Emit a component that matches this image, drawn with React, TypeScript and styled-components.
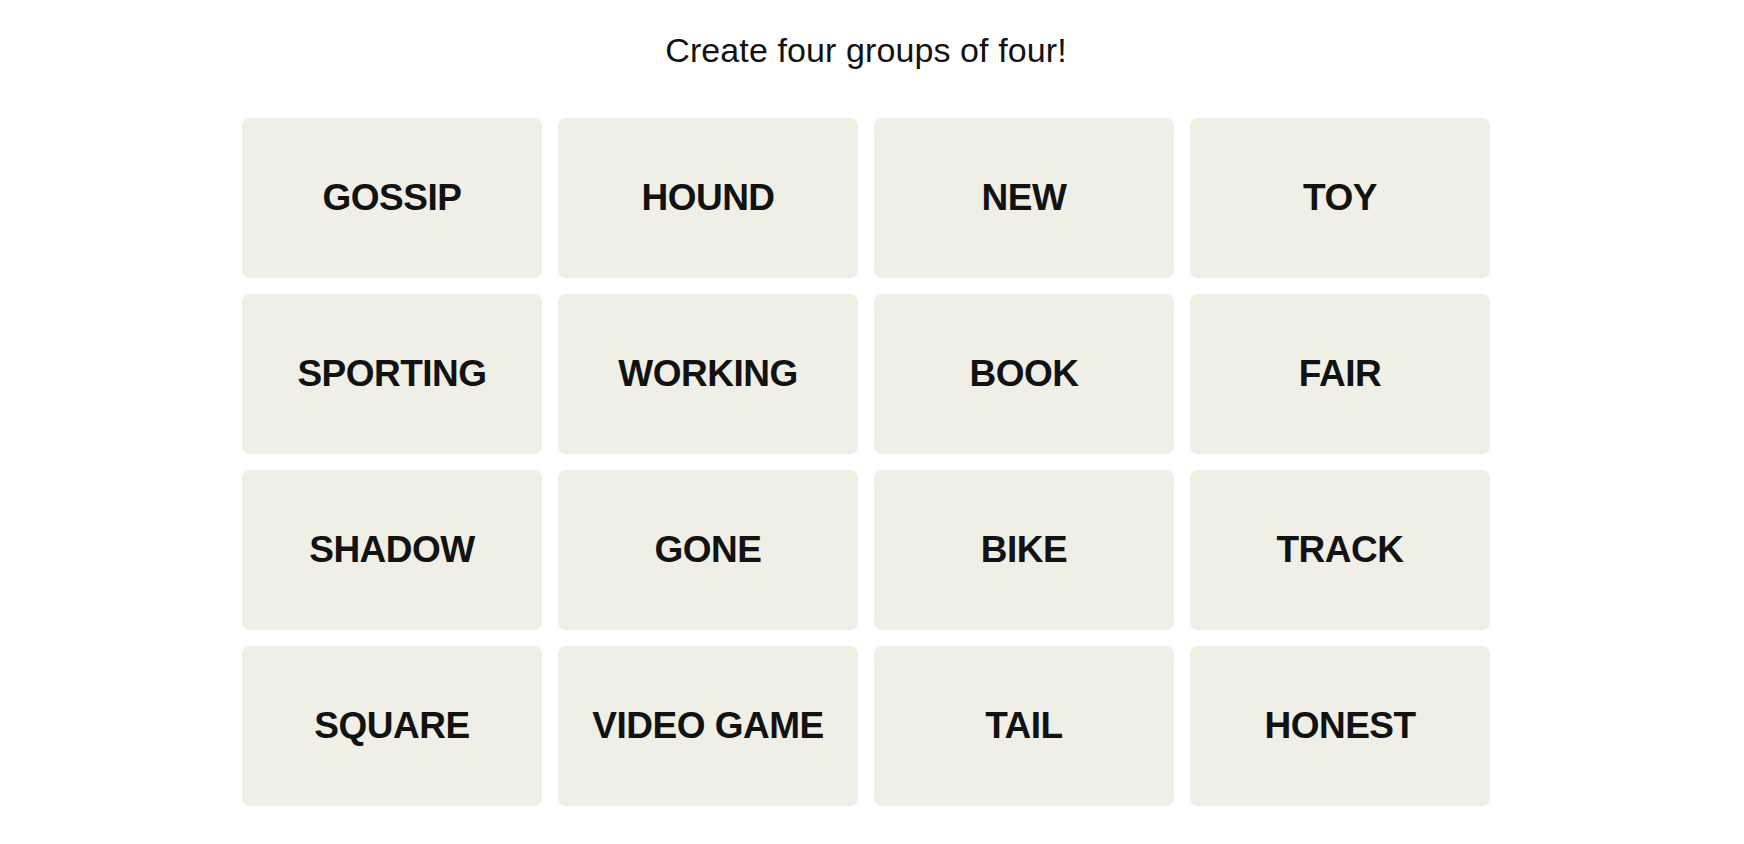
import React from 'react'
import styled, { createGlobalStyle } from 'styled-components'

const words = [
  'GOSSIP', 'HOUND', 'NEW', 'TOY',
  'SPORTING', 'WORKING', 'BOOK', 'FAIR',
  'SHADOW', 'GONE', 'BIKE', 'TRACK',
  'SQUARE', 'VIDEO GAME', 'TAIL', 'HONEST',
]

const GlobalStyle = createGlobalStyle`
  body {
    margin: 0;
    background: #fff;
    font-family: "Liberation Sans", Arial, sans-serif;
    color: #121212;
  }
`

const Page = styled.main`
  width: 1260px;
  margin: 0 auto;
  padding-top: 30px;
`

const Column = styled.div`
  width: 1248px;
  display: flex;
  flex-direction: column;
  align-items: center;
`

const Prompt = styled.p`
  margin: 0 0 48px;
  font-size: 34px;
  line-height: 40px;
  font-weight: 400;
  letter-spacing: 0.1px;
`

const Board = styled.div`
  display: grid;
  grid-template-columns: repeat(4, 300px);
  grid-auto-rows: 160px;
  gap: 16px;
`

const Tile = styled.button`
  display: flex;
  align-items: center;
  justify-content: center;
  border: 0;
  border-radius: 8px;
  background: #efefe6;
  color: #121212;
  font-family: "Liberation Sans", Arial, sans-serif;
  font-size: 37px;
  font-weight: 700;
  line-height: 1;
  letter-spacing: -0.5px;
  cursor: pointer;
  padding: 0 0 2px;
`

export default function App() {
  return (
    <>
      <GlobalStyle />
      <Page>
        <Column>
          <Prompt>Create four groups of four!</Prompt>
          <Board>
            {words.map((w) => (
              <Tile key={w}>{w}</Tile>
            ))}
          </Board>
        </Column>
      </Page>
    </>
  )
}
